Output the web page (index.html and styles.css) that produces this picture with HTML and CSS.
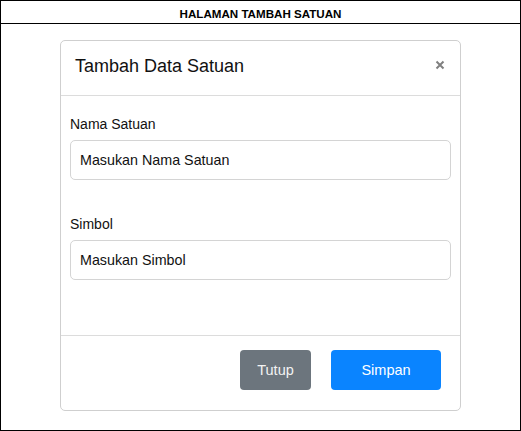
FILE: index.html
```html
<!DOCTYPE html>
<html lang="id">
<head>
<meta charset="utf-8">
<title>Halaman Tambah Satuan</title>
<link rel="stylesheet" href="styles.css">
</head>
<body>
<div class="frame">
  <div class="page-title">HALAMAN TAMBAH SATUAN</div>
  <div class="modal">
    <div class="modal-header">
      <h1 class="modal-title">Tambah Data Satuan</h1>
      <button class="close" type="button" aria-label="Close">
        <svg width="10" height="10" viewBox="0 0 10 10"><path d="M1.5 1.5 L8.5 8.5 M8.5 1.5 L1.5 8.5" stroke="#808080" stroke-width="2" stroke-linecap="butt"/></svg>
      </button>
    </div>
    <div class="modal-body">
      <div class="field">
        <label class="label">Nama Satuan</label>
        <div class="input">Masukan Nama Satuan</div>
      </div>
      <div class="field">
        <label class="label">Simbol</label>
        <div class="input">Masukan Simbol</div>
      </div>
    </div>
    <div class="modal-footer">
      <button class="btn btn-secondary" type="button">Tutup</button>
      <button class="btn btn-primary" type="button">Simpan</button>
    </div>
  </div>
</div>
</body>
</html>
```
FILE: styles.css
```css
* { box-sizing: border-box; }
html, body { margin: 0; padding: 0; background: #fff; }
body { font-family: "Liberation Sans", Arial, sans-serif; color: #000; }

.frame {
  width: 521px;
  height: 431px;
  border: 1px solid #000;
  display: flex;
  flex-direction: column;
}

.page-title {
  height: 23px;
  padding-top: 4px;
  line-height: 18px;
  font-size: 11.6px;
  font-weight: bold;
  text-align: center;
  border-bottom: 1px solid #000;
}

.modal {
  margin: 16px 59px 0;
  height: 371px;
  border: 1px solid #cfcfcf;
  border-radius: 5px;
  display: flex;
  flex-direction: column;
}

.modal-header {
  height: 55px;
  padding: 0 15px 4px 14px;
  border-bottom: 1px solid #dcdcdc;
  display: flex;
  align-items: center;
  justify-content: space-between;
}

.modal-title {
  margin: 0;
  font-size: 18px;
  font-weight: normal;
  line-height: 1.15;
  color: #111;
}

.close {
  border: 0;
  background: none;
  padding: 0;
  width: 10px;
  height: 10px;
  display: flex;
  margin-top: -2px;
}

.modal-body {
  padding: 20px 9px 0;
  display: flex;
  flex-direction: column;
  gap: 36px;
  height: 240px;
  border-bottom: 1px solid #dcdcdc;
}

.field {
  display: flex;
  flex-direction: column;
  gap: 8px;
}

.label {
  font-size: 14px;
  line-height: 16px;
  color: #111;
}

.input {
  height: 40px;
  border: 1px solid #d4d4d4;
  border-radius: 5px;
  padding: 0 9px;
  display: flex;
  align-items: center;
  font-size: 14.3px;
  color: #111;
}

.modal-footer {
  flex: 1;
  display: flex;
  justify-content: flex-end;
  align-items: flex-start;
  gap: 20px;
  padding: 14px 19px 0 0;
}

.btn {
  height: 40px;
  border: 0;
  border-radius: 4px;
  color: #fff;
  font-family: "Liberation Sans", Arial, sans-serif;
  font-size: 14.5px;
  padding: 0;
}

.btn-secondary { width: 71px; background: #6c757d; color: #f3f3f3; }
.btn-primary { width: 110px; background: #0a84ff; }
```
